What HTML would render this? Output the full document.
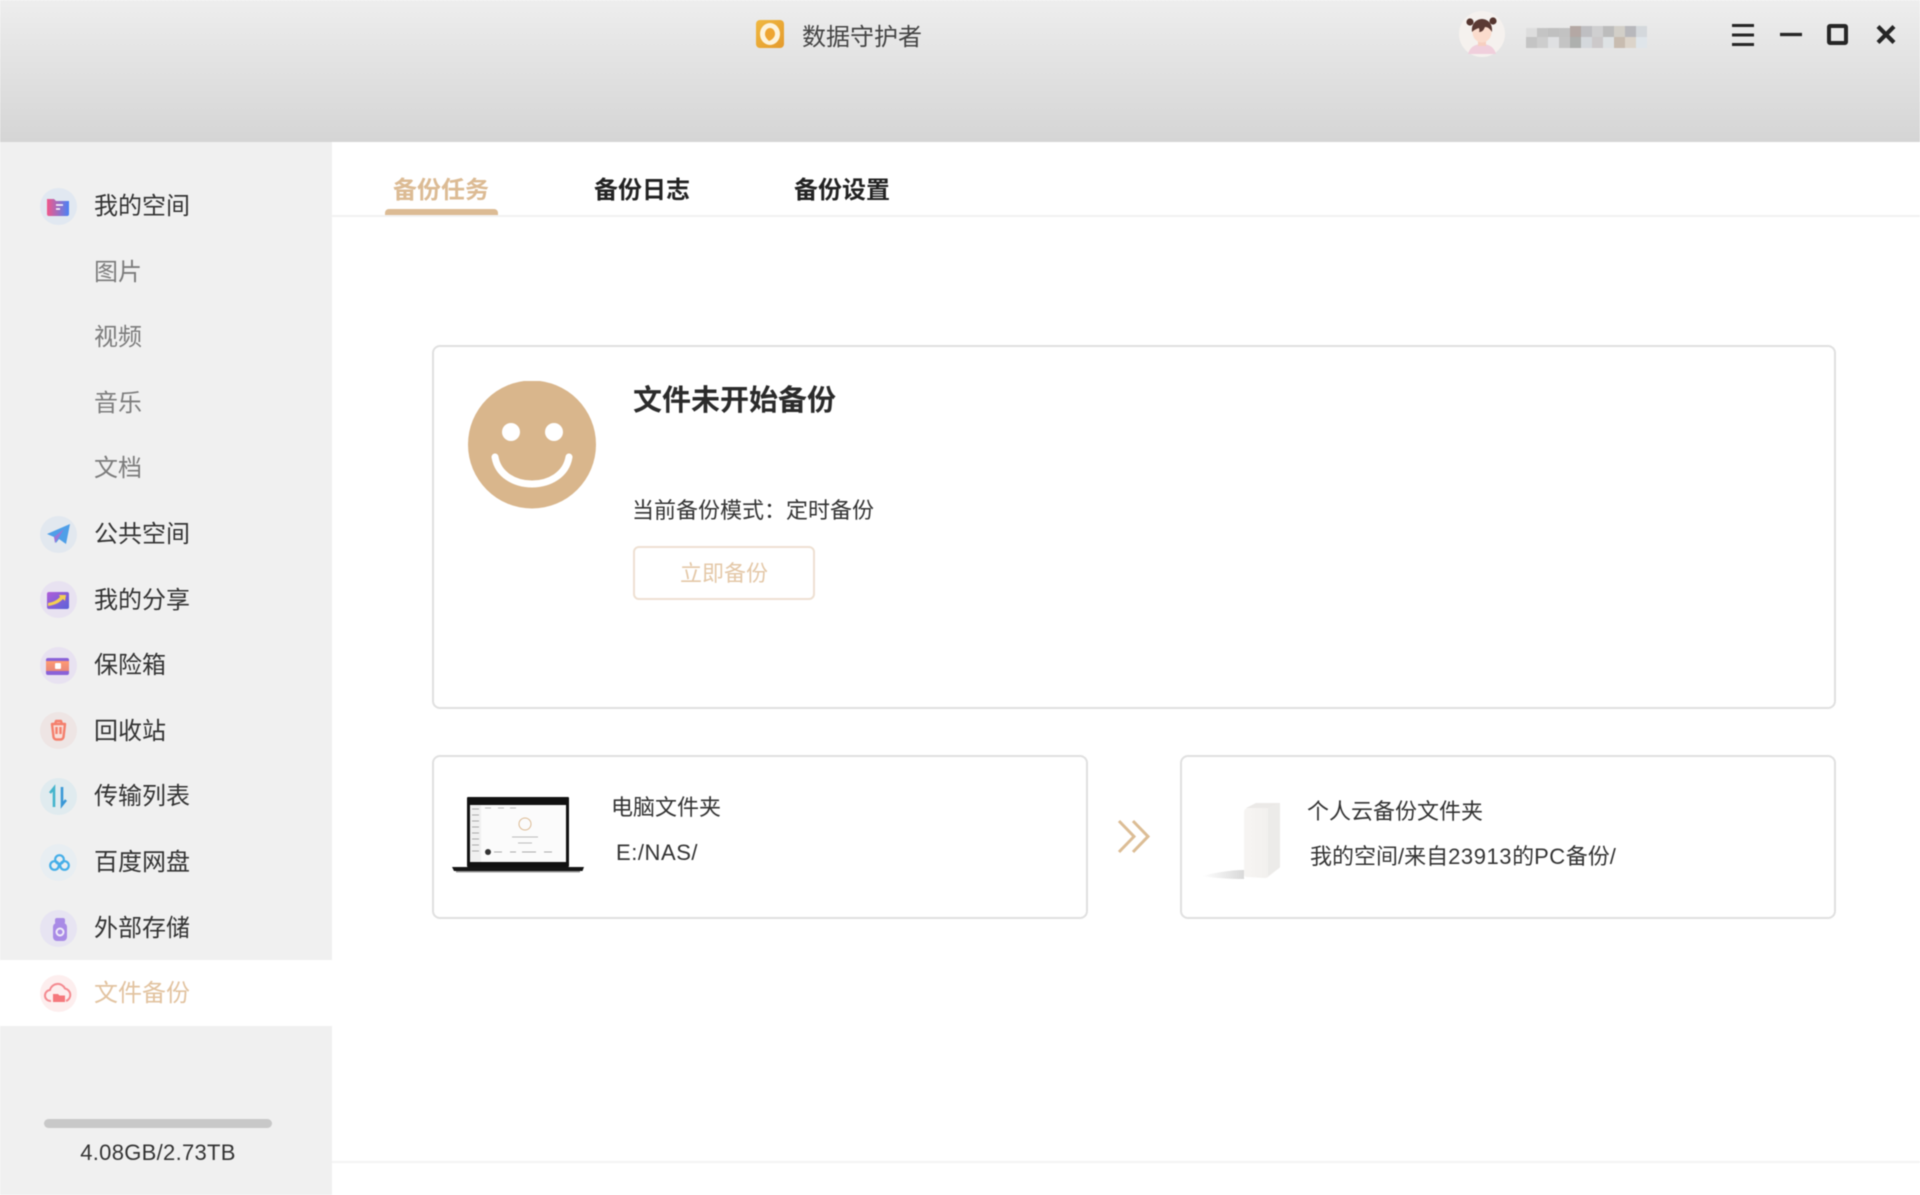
<!DOCTYPE html>
<html lang="zh-CN">
<head>
<meta charset="utf-8">
<title>数据守护者</title>
<style>
*{box-sizing:border-box;margin:0;padding:0}
html,body{width:1920px;height:1195px;overflow:hidden;background:#fff}
body{position:relative;font-family:"Liberation Sans","Noto Sans CJK SC",sans-serif;color:#333}
#root{position:absolute;left:0;top:0;width:1920px;height:1195px;filter:blur(.45px)}
.a{position:absolute}
.t{position:absolute;white-space:nowrap;height:40px;line-height:40px}
#head{left:0;top:0;width:1920px;height:142px;background:linear-gradient(#eeeeee 0,#e6e6e6 30%,#d5d5d5 100%)}
#side{left:0;top:142px;width:332px;height:1053px;background:#f0f0f0}
#active{left:0;top:960px;width:332px;height:66px;background:#fff}
.m{left:94px;font-size:24px;color:#333}
.s{left:94px;font-size:24px;color:#7c7c7c}
.c{position:absolute;left:40px;width:37px;height:37px}
.tab{font-size:24px;font-weight:700;color:#222;top:171px}
.card{position:absolute;background:#fff;border:2px solid #e0e0e0;border-radius:8px}
.f{font-size:22px;color:#333}
.l{letter-spacing:.55px}
.mos{position:absolute;width:11px;height:11px}
</style>
</head>
<body>
<div id="root">
<div class="a" id="head"></div>
<div class="a" id="side"></div>
<div class="a" id="active"></div>

<!-- logo -->
<svg class="a" style="left:756px;top:20px" width="28" height="28" viewBox="0 0 28 28">
<defs><linearGradient id="lg" x1="0" y1="0" x2="1" y2="1"><stop offset="0" stop-color="#f0b840"/><stop offset="1" stop-color="#e49a2c"/></linearGradient></defs>
<rect width="28" height="28" rx="4" fill="url(#lg)"/>
<ellipse cx="14" cy="14" rx="10" ry="11" fill="#fdf3dc"/>
<path d="M14 8c3 0 5 3 5 6s-3 6-6 7c-2-2-4-4-4-7s2-6 5-6z" fill="#eea532"/>
</svg>
<div class="t" style="left:802px;top:18px;font-size:24px;color:#444">数据守护者</div>

<!-- avatar -->
<svg class="a" style="left:1459px;top:11px" width="46" height="46" viewBox="0 0 46 46">
<circle cx="23" cy="23" r="23" fill="#f5f1ee"/>
<path d="M9 46c2-7 7-10 14-10s12 3 14 10z" fill="#f0cfdc" transform="translate(0 -3)"/>
<rect x="19" y="26" width="8" height="9" fill="#f7cfc0"/>
<ellipse cx="23" cy="21" rx="9.500" ry="10.500" fill="#fbdccd"/>
<path d="M13 21c-1-9 5-13 10-13s11 4 10 13c-2-3-4-5-7-5-1 2-2 5-6 5 1-2 0-3 0-4-3 1-5 2-7 4z" fill="#5b3a34"/>
<circle cx="11" cy="11" r="3.600" fill="#55352f"/>
<circle cx="34" cy="10" r="3.600" fill="#55352f"/>
</svg>

<!-- mosaic username -->
<div class="a" style="left:1526px;top:26px;width:121px;height:21px">
<i class="mos" style="left:0;top:2px;background:#ddd"></i><i class="mos" style="left:11px;top:2px;background:#c4c4c4"></i><i class="mos" style="left:22px;top:2px;background:#c0c0c0"></i><i class="mos" style="left:33px;top:2px;background:#c2c2c2"></i><i class="mos" style="left:44px;top:0;background:#b4a8a4"></i><i class="mos" style="left:55px;top:0;background:#bfbfc2"></i><i class="mos" style="left:66px;top:0;background:#cfcfd0"></i><i class="mos" style="left:77px;top:0;background:#bcbcbc"></i><i class="mos" style="left:88px;top:0;background:#d2cfc8"></i><i class="mos" style="left:99px;top:0;background:#b8b8bc"></i><i class="mos" style="left:110px;top:0;background:#d4d8dc"></i>
<i class="mos" style="left:0;top:11px;background:#c4c4c4"></i><i class="mos" style="left:11px;top:11px;background:#cdcdcd"></i><i class="mos" style="left:22px;top:11px;background:#dfe0e2"></i><i class="mos" style="left:33px;top:11px;background:#c4c4c4"></i><i class="mos" style="left:44px;top:11px;background:#aeb0ae"></i><i class="mos" style="left:55px;top:11px;background:#d4d8dc"></i><i class="mos" style="left:66px;top:11px;background:#ccc9ca"></i><i class="mos" style="left:77px;top:11px;background:#dee2e4"></i><i class="mos" style="left:88px;top:11px;background:#c8bcb0"></i><i class="mos" style="left:99px;top:11px;background:#dcd4ca"></i><i class="mos" style="left:110px;top:11px;background:#dfe5ea"></i>
</div>

<!-- window controls -->
<svg class="a" style="left:1725px;top:15px" width="180" height="40" viewBox="1725 15 180 40" fill="none" stroke="#262626">
<path d="M1732 25.500h22M1732 35h22M1732 44.500h22" stroke-width="3"/>
<path d="M1780 34.500h22" stroke-width="3.200"/>
<rect x="1829" y="26" width="17" height="17" stroke-width="4" rx="1"/>
<path d="M1878 26.500l16 16M1894 26.500l-16 16" stroke-width="4.200"/>
</svg>

<!-- sidebar -->
<svg class="c" style="top:188px" viewBox="0 0 37 37"><defs><linearGradient id="g1" x1="0" x2="1"><stop offset="0" stop-color="#f2588a"/><stop offset="1" stop-color="#4a82f6"/></linearGradient></defs><circle cx="18.500" cy="18.500" r="18.500" fill="#e1e8f1"/><path d="M7 11h7l2 2h13v13a2 2 0 0 1-2 2H9a2 2 0 0 1-2-2z" fill="url(#g1)"/><path d="M16 17h7M16 21h4" stroke="#fff" stroke-width="1.600"/></svg>
<div class="t m" style="top:187px">我的空间</div>
<div class="t s" style="top:253px">图片</div>
<div class="t s" style="top:318px">视频</div>
<div class="t s" style="top:384px">音乐</div>
<div class="t s" style="top:449px">文档</div>

<svg class="c" style="top:516px" viewBox="0 0 37 37"><circle cx="18.500" cy="18.500" r="18.500" fill="#e2e8ef"/><path d="M7 18L30 8l-4 20-7-5-3 4-2-6z" fill="#4f9fe8"/><path d="M14 21l10-8-7 11-2 3z" fill="#9a76d8"/></svg>
<div class="t m" style="top:515px">公共空间</div>

<svg class="c" style="top:581px" viewBox="0 0 37 37"><defs><linearGradient id="g2" x1="0" y1="0" x2="1" y2="1"><stop offset="0" stop-color="#b05ed8"/><stop offset="1" stop-color="#5b62d8"/></linearGradient></defs><circle cx="18.500" cy="18.500" r="18.500" fill="#e8e2f1"/><rect x="7" y="11" width="22" height="17" rx="2" fill="url(#g2)"/><path d="M8 22c5-1 8-2 12-6l-1-2 7 0-1 6-2-2c-4 4-8 6-15 7z" fill="#f3cf52"/></svg>
<div class="t m" style="top:581px">我的分享</div>

<svg class="c" style="top:647px" viewBox="0 0 37 37"><defs><linearGradient id="g3" x1="0" y1="0" x2="0" y2="1"><stop offset="0" stop-color="#ff9a72"/><stop offset="1" stop-color="#e8887a"/></linearGradient></defs><circle cx="18.500" cy="18.500" r="18.500" fill="#e8e2f1"/><rect x="6" y="11" width="23" height="17" rx="2" fill="#8a62d8"/><rect x="6" y="14" width="23" height="10" fill="url(#g3)"/><rect x="15" y="16" width="6" height="6" rx="1" fill="#fff"/></svg>
<div class="t m" style="top:646px">保险箱</div>

<svg class="c" style="top:712px" viewBox="0 0 37 37"><circle cx="18.500" cy="18.500" r="18.500" fill="#eee5e4"/><path d="M12 12h13l-1.500 13a3 3 0 0 1-3 2.500h-4a3 3 0 0 1-3-2.500zM15 12l1-3h5l1 3M16.500 15v7M20.500 15v7" fill="#f8ded8" stroke="#f47f6c" stroke-width="2.400" stroke-linejoin="round"/></svg>
<div class="t m" style="top:712px">回收站</div>

<svg class="c" style="top:778px" viewBox="0 0 37 37"><circle cx="18.500" cy="18.500" r="18.500" fill="#e0ebef"/><path d="M14 29V10l-4 5" fill="none" stroke="#44b4cc" stroke-width="2.600"/><path d="M22 9v18l4-5" fill="none" stroke="#3a98d6" stroke-width="2.600"/></svg>
<div class="t m" style="top:777px">传输列表</div>

<svg class="c" style="top:844px" viewBox="0 0 37 37"><circle cx="18.500" cy="18.500" r="18.500" fill="#e8eef2"/><g fill="none" stroke="#45aee8" stroke-width="2.200"><circle cx="19.500" cy="15.500" r="4.300"/><circle cx="14.500" cy="21.500" r="4.300"/><circle cx="24.500" cy="21.500" r="4.300"/></g></svg>
<div class="t m" style="top:843px">百度网盘</div>

<svg class="c" style="top:910px" viewBox="0 0 37 37"><circle cx="18.500" cy="18.500" r="18.500" fill="#e7e4f2"/><rect x="13" y="13" width="14" height="18" rx="4" fill="#a98be6"/><rect x="15" y="8" width="10" height="6" rx="2" fill="#a98be6"/><circle cx="20" cy="22" r="3.500" fill="none" stroke="#efeaf9" stroke-width="2"/></svg>
<div class="t m" style="top:909px">外部存储</div>

<svg class="c" style="top:975px" viewBox="0 0 37 37"><circle cx="18.500" cy="18.500" r="18.500" fill="#fdeeee"/><path d="M11 26a5.500 5.500 0 0 1-1-11 8 8 0 0 1 15-1.500A6.500 6.500 0 0 1 26 26" fill="none" stroke="#f48a90" stroke-width="2"/><path d="M13 19h5l1.500 1.500H25V27H13z" fill="#f5787c"/></svg>
<div class="t m" style="top:974px;color:#e2c3a0">文件备份</div>

<div class="a" style="left:44px;top:1119px;width:228px;height:9px;background:#c8c8c8;border-radius:5px"></div>
<div class="t" style="left:44px;width:228px;text-align:center;top:1133px;font-size:22px;color:#333;letter-spacing:.3px">4.08GB/2.73TB</div>

<!-- tabs -->
<div class="t tab" style="left:393px;color:#dcbb94">备份任务</div>
<div class="t tab" style="left:594px">备份日志</div>
<div class="t tab" style="left:794px">备份设置</div>
<div class="a" style="left:332px;top:215px;width:1588px;height:2px;background:#f2f2f2"></div>
<div class="a" style="left:385px;top:209px;width:113px;height:6px;background:#dcbb94;border-radius:4px 4px 0 0"></div>

<!-- main card -->
<div class="card" style="left:432px;top:345px;width:1404px;height:364px"></div>
<svg class="a" style="left:468px;top:381px" width="128" height="128" viewBox="0 0 128 128">
<circle cx="64" cy="63.500" r="64" fill="#d9b68c"/>
<circle cx="43" cy="51" r="9" fill="#fff"/>
<circle cx="86" cy="51" r="9" fill="#fff"/>
<path d="M27 76C33 112 95 112 101 76" fill="none" stroke="#fff" stroke-width="7" stroke-linecap="round"/>
</svg>
<div class="t" style="left:633px;top:381px;font-size:29px;font-weight:700;color:#2b2b2b">文件未开始备份</div>
<div class="t" style="left:632px;top:491px;font-size:22px;color:#333">当前备份模式：定时备份</div>
<div class="a" style="left:633px;top:546px;width:182px;height:54px;border:2px solid #eee0d2;border-radius:6px;text-align:center;line-height:52px;font-size:22px;color:#e4c8a8;background:#fff">立即备份</div>

<!-- lower left card -->
<div class="card" style="left:432px;top:755px;width:656px;height:164px"></div>
<svg class="a" style="left:450px;top:795px" width="136" height="78" viewBox="0 0 136 78">
<rect x="17" y="2" width="102" height="70" rx="1" fill="#111"/>
<rect x="20" y="10" width="96" height="57" fill="#fbfbfb"/>
<rect x="20" y="10" width="11" height="57" fill="#f0f0f0"/>
<path d="M22 14h7M22 20h7M22 26h7M22 32h7M22 38h7M22 44h7M22 50h7M22 56h7" stroke="#aaa" stroke-width="1"/>
<path d="M35 13h6M48 13h6M60 13h6" stroke="#bbb" stroke-width="1"/>
<circle cx="75" cy="29" r="6" fill="none" stroke="#dcbb94" stroke-width="1"/>
<path d="M62 42h26M68 48h14" stroke="#bbb" stroke-width="1"/>
<circle cx="38" cy="57" r="3" fill="#333"/>
<path d="M44 57h8M60 57h6M72 57h14M94 57h8" stroke="#aaa" stroke-width="1"/>
<path d="M2 72h132l-1.500 4H4z" fill="#151515"/>
<rect x="6" y="76" width="124" height="1.500" fill="#999"/>
</svg>
<div class="t f" style="left:611px;top:788px">电脑文件夹</div>
<div class="t f l" style="left:616px;top:833px">E:/NAS/</div>

<!-- chevrons -->
<svg class="a" style="left:1116px;top:818px" width="36" height="37" viewBox="0 0 36 37" fill="none" stroke="#dcbd95" stroke-width="3">
<path d="M3 3l15 15.500L3 34"/><path d="M17 3l15 15.500L17 34"/>
</svg>

<!-- lower right card -->
<div class="card" style="left:1180px;top:755px;width:656px;height:164px"></div>
<svg class="a" style="left:1200px;top:800px" width="84" height="82" viewBox="0 0 84 82">
<defs>
<linearGradient id="sh" x1="0" x2="1"><stop offset="0" stop-color="#fff"/><stop offset="1" stop-color="#cfcfcf"/></linearGradient>
<linearGradient id="dv" x1="0" x2="1"><stop offset="0" stop-color="#f7f5f3"/><stop offset="1" stop-color="#f0eeec"/></linearGradient>
</defs>
<path d="M2 76c12-3 28-6 42-6v9c-14 0-30-1-42-3z" fill="url(#sh)" opacity=".8"/>
<path d="M44 12q0-3 3-4l20-1 13-4v63q0 2-2 3l-10 8q-1 1-3 1l-18-1q-3 0-3-3z" fill="url(#dv)"/>
<path d="M46 8l22 0 12-5-24 0z" fill="#ebe9e7"/>
<path d="M68 8l12-5v64l-12 9z" fill="#ecebe9"/>
</svg>
<div class="t f" style="left:1307px;top:792px">个人云备份文件夹</div>
<div class="t f" style="left:1310px;top:837px">我的空间/来自<span class="l">23913</span>的<span class="l">PC</span>备份/</div>

<!-- footer line -->
<div class="a" style="left:332px;top:1161px;width:1588px;height:2px;background:#f4f4f4"></div>
</div>
</body>
</html>
